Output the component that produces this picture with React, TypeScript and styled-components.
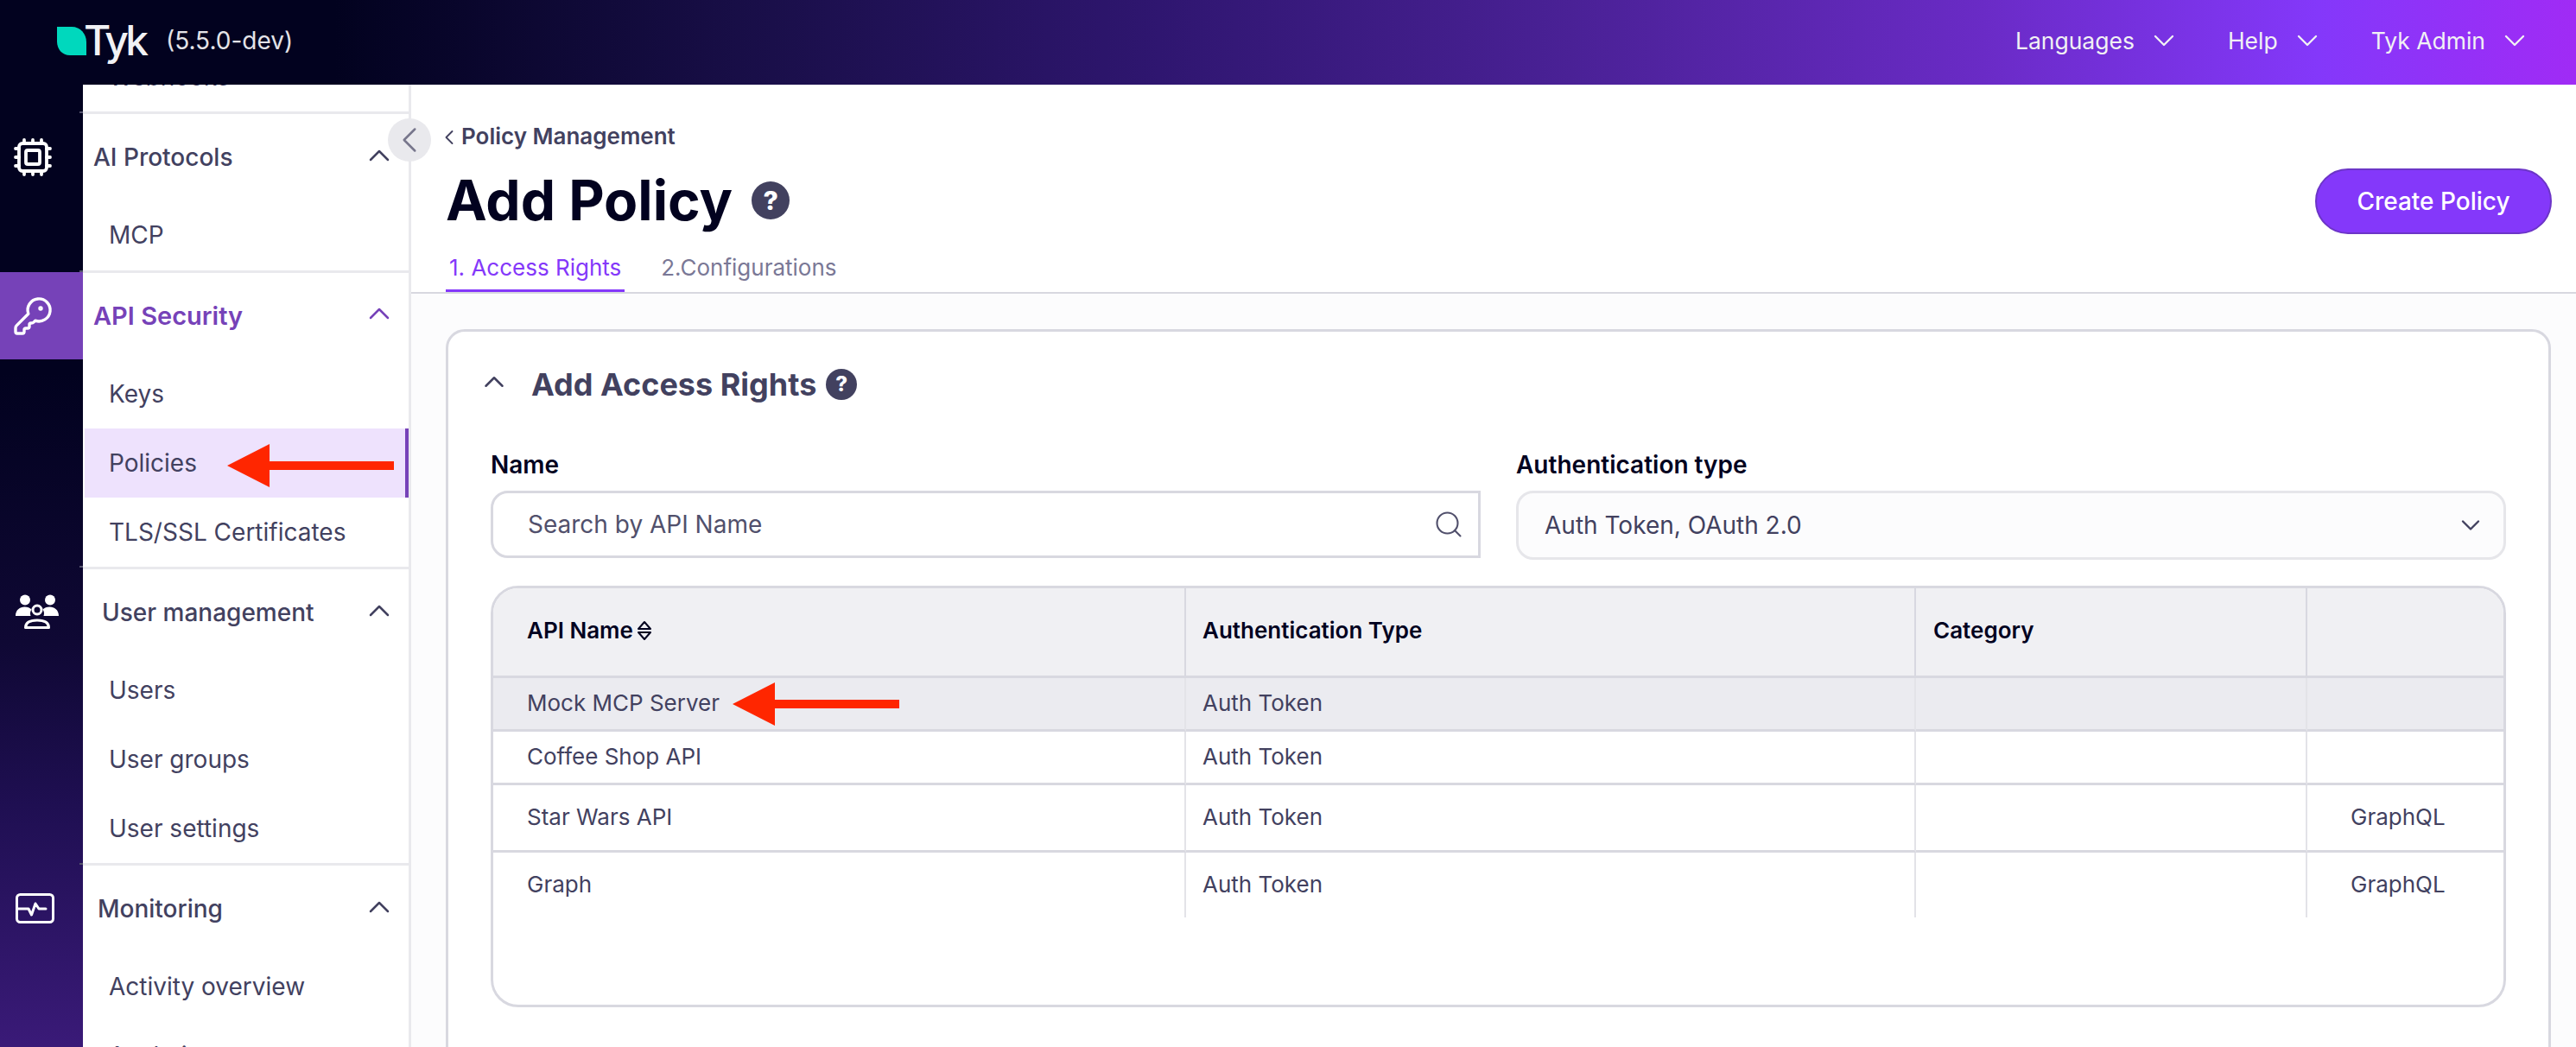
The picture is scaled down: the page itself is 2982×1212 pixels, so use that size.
import React from 'react'
import styled, { createGlobalStyle } from 'styled-components'
import { ChevronDown, ChevronLeft, ChevronUp, Cpu, KeyRound, Search } from 'lucide-react'

const GlobalStyle = createGlobalStyle`
  html, body {
    margin: 0;
    padding: 0;
    height: 100%;
    overflow: hidden;
    background: #fff;
  }
  body {
    font-family: Inter, "Liberation Sans", sans-serif;
    color: #42415f;
  }
  * { box-sizing: border-box; }
`

const Page = styled.div`
  width: 2982px;
  height: 1212px;
  display: flex;
  flex-direction: column;
  overflow: hidden;
`

const TopBar = styled.header`
  height: 98px;
  flex: none;
  display: flex;
  align-items: center;
  justify-content: space-between;
  padding: 0 51px 4px 66px;
  background: linear-gradient(90deg, #02021f 0%, #02021f 13%, #1a0f4a 30%, #2f1670 45%, #4a2196 61%, #6a2bc6 77%, #8438fa 90%, #a02bf5 100%);
`

const Brand = styled.div`
  display: flex;
  align-items: center;
`

const LogoName = styled.span`
  font-size: 48px;
  font-weight: 500;
  letter-spacing: -4px;
  color: #f1f1f4;
  line-height: 1;
  margin: 0 24px 0 -3px;
`

const Version = styled.span`
  font-size: 28px;
  color: #e3e3e8;
`

const TopMenu = styled.nav`
  display: flex;
  align-items: center;
  gap: 54px;
`

const TopMenuItem = styled.div`
  display: flex;
  align-items: center;
  gap: 14px;
  font-size: 26.500px;
  color: #f1f1f4;
`

const Body = styled.div`
  flex: 1;
  display: flex;
  min-height: 0;
`

const Rail = styled.div`
  width: 96px;
  flex: none;
  padding-top: 33px;
  background: linear-gradient(180deg, #02021f 0%, #02021f 30%, #0f0834 58%, #1f0f52 75%, #3a1a78 100%);
`

const RailSlot = styled.div<{ $height: number }>`
  height: ${p => p.$height}px;
  position: relative;
  &::before {
    content: '';
    position: absolute;
    top: -2px;
    right: 0;
    width: 4px;
    height: 2px;
    background: #55546e;
  }
`

const RailButton = styled.div<{ $active?: boolean; $pad?: number }>`
  height: 101px;
  display: flex;
  align-items: center;
  padding-left: ${p => p.$pad ?? 14}px;
  color: #fff;
  background: ${p => (p.$active ? '#7642b8' : 'transparent')};
`

const Sidebar = styled.aside`
  width: 380px;
  flex: none;
  background: #fff;
  border-right: 3px solid #e9e9ed;
  position: relative;
`

const SidebarScroll = styled.div`
  height: 100%;
  overflow: hidden;
`

const SidebarList = styled.div`
  margin-top: -49px;
`

const Group = styled.section<{ $pad?: number }>`
  border-bottom: 3px solid #e9e9ed;
  padding-bottom: ${p => p.$pad ?? 0}px;
  &:last-child { border-bottom: 0; }
`

const GroupHead = styled.div<{ $indent: number; $active?: boolean }>`
  height: 100px;
  display: flex;
  align-items: center;
  justify-content: space-between;
  padding: 0 14px ${p => (p.$active ? 2 : 0)}px ${p => p.$indent}px;
  font-size: ${p => (p.$active ? 29 : 28)}px;
  font-weight: ${p => (p.$active ? 600 : 500)};
  color: ${p => (p.$active ? '#7642b8' : '#42415f')};
  svg { margin-top: -4px; }
`

const GroupItem = styled.div<{ $active?: boolean }>`
  height: 80px;
  display: flex;
  align-items: center;
  position: relative;
  padding-left: ${p => (p.$active ? 28 : 30)}px;
  margin-left: ${p => (p.$active ? 2 : 0)}px;
  font-size: 28px;
  color: #42415f;
  background: ${p => (p.$active ? '#eee2fd' : 'transparent')};
  border-right: ${p => (p.$active ? '4px solid #7642b8' : '0')};
`

const CollapseButton = styled.button`
  position: absolute;
  top: 39px;
  right: -26px;
  width: 50px;
  height: 50px;
  border: 0;
  padding: 0;
  border-radius: 50%;
  background: #e9e9ed;
  color: #77768c;
  display: flex;
  align-items: center;
  justify-content: center;
  z-index: 2;
`

const Annotation = styled.svg<{ $left: number; $top: number }>`
  position: absolute;
  left: ${p => p.$left}px;
  top: ${p => p.$top}px;
`

const Main = styled.main`
  flex: 1;
  min-width: 0;
  background: #fcfcfd;
`

const PageHead = styled.div`
  background: #fff;
  padding: 41px 28px 0 40px;
  border-bottom: 2px solid #d8d8e0;
  height: 242px;
`

const Breadcrumb = styled.div`
  display: flex;
  align-items: center;
  height: 36px;
  font-size: 26px;
  font-weight: 600;
  color: #42415f;
  svg { margin-left: -10px; margin-top: 3px; }
`

const TitleRow = styled.div`
  display: flex;
  align-items: center;
  justify-content: space-between;
  margin-top: 21px;
  height: 72px;
`

const TitleWrap = styled.div`
  display: flex;
  align-items: center;
  gap: 22px;
`

const Title = styled.h1`
  margin: 0;
  font-size: 64px;
  font-weight: 700;
  line-height: 72px;
  color: #02021f;
`

const HelpBadge = styled.span<{ $size: number }>`
  width: ${p => p.$size}px;
  height: ${p => p.$size}px;
  flex: none;
  border-radius: 50%;
  background: #42415f;
  color: #fff;
  font-size: ${p => Math.round(p.$size * 0.68)}px;
  font-weight: 800;
  display: inline-flex;
  align-items: center;
  justify-content: center;
  line-height: 1;
`

const PrimaryButton = styled.button`
  width: 274px;
  height: 76px;
  margin-top: 2px;
  border-radius: 38px;
  border: 2px solid #6c35c7;
  background: #8438fa;
  color: #fff;
  font-family: inherit;
  font-size: 28px;
  font-weight: 500;
`

const Tabs = styled.div`
  display: flex;
  gap: 38px;
  margin-top: 24px;
`

const Tab = styled.div<{ $active?: boolean }>`
  height: 46px;
  line-height: 36px;
  padding: 0 4px;
  font-size: 26px;
  color: ${p => (p.$active ? '#8438fa' : '#7a7896')};
  border-bottom: 3px solid ${p => (p.$active ? '#8438fa' : 'transparent')};
`

const Content = styled.div`
  padding: 41px 29px 0 40px;
`

const Card = styled.section`
  height: 860px;
  background: #fff;
  border: 3px solid #d8d8e0;
  border-radius: 22px;
  padding: 0 49px;
`

const CardHead = styled.div`
  display: flex;
  align-items: center;
  height: 122px;
  color: #42415f;
  svg { margin-left: -15px; margin-top: -6px; }
`

const CardTitle = styled.h2`
  margin: 0 11px 0 24px;
  font-size: 36px;
  font-weight: 700;
  color: #42415f;
`

const FilterRow = styled.div`
  display: grid;
  grid-template-columns: 1fr 1fr;
  column-gap: 41px;
  margin-top: 14px;
`

const Field = styled.div`
  display: flex;
  flex-direction: column;
  gap: 12px;
`

const FieldLabel = styled.label`
  font-size: 28px;
  font-weight: 600;
  line-height: 36px;
  color: #02021f;
`

const SearchBox = styled.div`
  height: 78px;
  display: flex;
  align-items: center;
  justify-content: space-between;
  padding: 0 16px 0 40px;
  background: #fff;
  border: 3px solid #d8d8e0;
  border-radius: 20px 0 0 20px;
  font-size: 28px;
  color: #51506c;
`

const SelectBox = styled.div`
  height: 80px;
  display: flex;
  align-items: center;
  justify-content: space-between;
  padding: 0 20px 0 30px;
  background: #fcfcfd;
  border: 3px solid #e6e6ea;
  border-radius: 20px;
  font-size: 28px;
  color: #42415f;
`

const TableWrap = styled.div`
  margin-top: 30px;
  height: 488px;
  border: 3px solid #d8d8e0;
  border-radius: 32px;
  overflow: hidden;
  background: #fff;
`

const Table = styled.table`
  width: 100%;
  table-layout: fixed;
  border-collapse: separate;
  border-spacing: 0;
`

const HeadCell = styled.th<{ $pad: number; $w?: number }>`
  height: 104px;
  padding: 0 0 4px ${p => p.$pad}px;
  width: ${p => (p.$w ? `${p.$w}px` : 'auto')};
  text-align: left;
  font-size: 26px;
  font-weight: 600;
  color: #02021f;
  background: #f0f0f3;
  border-bottom: 3px solid #d8d8e0;
  border-right: 2px solid #d8d8e0;
  &:last-child { border-right: 0; }
`

const SortLabel = styled.span`
  display: inline-flex;
  align-items: center;
  gap: 4px;
`

const Row = styled.tr<{ $height: number; $selected?: boolean }>`
  height: ${p => p.$height}px;
  background: ${p => (p.$selected ? '#ebebf0' : '#fff')};
`

const Cell = styled.td<{ $pad: number }>`
  position: relative;
  padding: 0 0 2px ${p => p.$pad}px;
  font-size: 26px;
  color: #42415f;
  border-bottom: 3px solid #d8d8e0;
  border-right: 2px solid #e3e3e8;
  &:last-child { border-right: 0; }
  tr:last-child & { border-bottom: 0; }
`

const columnPads = [39, 19, 20, 50]
const columnWidths = [802, 845, 453]

const rows = [
  { name: 'Mock MCP Server', category: '', height: 62, selected: true },
  { name: 'Coffee Shop API', category: '', height: 62 },
  { name: 'Star Wars API', category: 'GraphQL', height: 78 },
  { name: 'Graph', category: 'GraphQL', height: 75 },
]

function RedArrow({ left, top }: { left: number; top: number }) {
  return (
    <Annotation $left={left} $top={top} width="193" height="50" viewBox="0 0 193 50">
      <path d="M0 25L49 0V20H193V30H49V50Z" fill="#ff2600" />
    </Annotation>
  )
}

function UsersIcon() {
  return (
    <svg width="50" height="40" viewBox="0 0 50 40" fill="none">
      <circle cx="11" cy="6.500" r="6" fill="#fff" />
      <circle cx="40" cy="6.500" r="6" fill="#fff" />
      <path d="M0 25c0-7 5-10.500 10.500-10.500 3.500 0 6 1 8 3-1.500 2-2 5-1 7.500z" fill="#fff" />
      <path d="M50 25c0-7-5-10.500-10.500-10.500-3.500 0-6 1-8 3 1.500 2 2 5 1 7.500z" fill="#fff" />
      <circle cx="25" cy="18" r="5" stroke="#fff" strokeWidth="3" />
      <path d="M11.500 38.500c0-6 5-8.500 13.500-8.500s13.500 2.500 13.500 8.500z" stroke="#fff" strokeWidth="3" strokeLinejoin="round" />
    </svg>
  )
}

function MonitorIcon() {
  return (
    <svg width="45" height="35" viewBox="0 0 45 35" fill="none">
      <rect x="1.500" y="1.500" width="42" height="32" rx="4" stroke="#fff" strokeWidth="3" />
      <path d="M3 18H15l3.500 7L23 12l4 6h8" stroke="#fff" strokeWidth="3" strokeLinejoin="round" strokeLinecap="round" />
    </svg>
  )
}

function TykLeaf() {
  return (
    <svg width="34" height="33" viewBox="0 0 34 33">
      <path d="M0 0H17C27 0 34 8 34 18V33H15C6 33 0 26 0 17Z" fill="#00d8bd" />
    </svg>
  )
}

function SortIcon() {
  return (
    <svg width="18" height="24" viewBox="0 0 18 24" fill="none" stroke="#02021f" strokeWidth="2">
      <path d="M9 2L16 10H2Z" strokeLinejoin="round" />
      <path d="M9 22L16 14H2Z" strokeLinejoin="round" />
    </svg>
  )
}

const Chevron = () => <ChevronUp size={40} strokeWidth={1.5} />

const App: React.FunctionComponent<{}> = () => {
  return (
    <Page>
      <GlobalStyle />
      <TopBar>
        <Brand>
          <TykLeaf />
          <LogoName>Tyk</LogoName>
          <Version>(5.5.0-dev)</Version>
        </Brand>
        <TopMenu>
          <TopMenuItem>Languages <ChevronDown size={40} strokeWidth={1.4} /></TopMenuItem>
          <TopMenuItem>Help <ChevronDown size={40} strokeWidth={1.4} /></TopMenuItem>
          <TopMenuItem>Tyk Admin <ChevronDown size={40} strokeWidth={1.4} /></TopMenuItem>
        </TopMenu>
      </TopBar>
      <Body>
        <Rail>
          <RailSlot $height={184}>
            <RailButton $pad={14}><Cpu size={48} strokeWidth={1.9} /></RailButton>
          </RailSlot>
          <RailSlot $height={342}>
            <RailButton $active $pad={14}><KeyRound size={48} strokeWidth={1.7} /></RailButton>
          </RailSlot>
          <RailSlot $height={344}>
            <RailButton $pad={18}><UsersIcon /></RailButton>
          </RailSlot>
          <RailSlot $height={101}>
            <RailButton $pad={18}><MonitorIcon /></RailButton>
          </RailSlot>
        </Rail>
        <Sidebar>
          <CollapseButton><ChevronLeft size={50} strokeWidth={1.2} /></CollapseButton>
          <SidebarScroll>
            <SidebarList>
              <Group>
                <GroupItem>Webhooks</GroupItem>
              </Group>
              <Group $pad={1}>
                <GroupHead $indent={12}>AI Protocols <Chevron /></GroupHead>
                <GroupItem>MCP</GroupItem>
              </Group>
              <Group>
                <GroupHead $indent={12} $active>API Security <Chevron /></GroupHead>
                <GroupItem>Keys</GroupItem>
                <GroupItem $active>
                  Policies
                  <RedArrow left={165} top={18} />
                </GroupItem>
                <GroupItem>TLS/SSL Certificates</GroupItem>
              </Group>
              <Group>
                <GroupHead $indent={22}>User management <Chevron /></GroupHead>
                <GroupItem>Users</GroupItem>
                <GroupItem>User groups</GroupItem>
                <GroupItem>User settings</GroupItem>
              </Group>
              <Group>
                <GroupHead $indent={17}>Monitoring <Chevron /></GroupHead>
                <GroupItem>Activity overview</GroupItem>
                <GroupItem>Analytics</GroupItem>
              </Group>
            </SidebarList>
          </SidebarScroll>
        </Sidebar>
        <Main>
          <PageHead>
            <Breadcrumb><ChevronLeft size={28} strokeWidth={1.6} />Policy Management</Breadcrumb>
            <TitleRow>
              <TitleWrap>
                <Title>Add Policy</Title>
                <HelpBadge $size={44}>?</HelpBadge>
              </TitleWrap>
              <PrimaryButton>Create Policy</PrimaryButton>
            </TitleRow>
            <Tabs>
              <Tab $active>1. Access Rights</Tab>
              <Tab>2.Configurations</Tab>
            </Tabs>
          </PageHead>
          <Content>
            <Card>
              <CardHead>
                <ChevronUp size={38} strokeWidth={1.6} />
                <CardTitle>Add Access Rights</CardTitle>
                <HelpBadge $size={36}>?</HelpBadge>
              </CardHead>
              <FilterRow>
                <Field>
                  <FieldLabel>Name</FieldLabel>
                  <SearchBox>
                    Search by API Name
                    <Search size={36} strokeWidth={1.4} />
                  </SearchBox>
                </Field>
                <Field>
                  <FieldLabel>Authentication type</FieldLabel>
                  <SelectBox>
                    Auth Token, OAuth 2.0
                    <ChevronDown size={36} strokeWidth={1.6} />
                  </SelectBox>
                </Field>
              </FilterRow>
              <TableWrap>
                <Table>
                  <thead>
                    <tr>
                      <HeadCell $pad={columnPads[0]} $w={columnWidths[0]}>
                        <SortLabel>API Name <SortIcon /></SortLabel>
                      </HeadCell>
                      <HeadCell $pad={columnPads[1]} $w={columnWidths[1]}>Authentication Type</HeadCell>
                      <HeadCell $pad={columnPads[2]} $w={columnWidths[2]}>Category</HeadCell>
                      <HeadCell $pad={columnPads[3]} />
                    </tr>
                  </thead>
                  <tbody>
                    {rows.map(row => (
                      <Row key={row.name} $height={row.height} $selected={row.selected}>
                        <Cell $pad={columnPads[0]}>
                          {row.name}
                          {row.selected && <RedArrow left={277} top={5} />}
                        </Cell>
                        <Cell $pad={columnPads[1]}>Auth Token</Cell>
                        <Cell $pad={columnPads[2]} />
                        <Cell $pad={columnPads[3]}>{row.category}</Cell>
                      </Row>
                    ))}
                  </tbody>
                </Table>
              </TableWrap>
            </Card>
          </Content>
        </Main>
      </Body>
    </Page>
  )
}

export default App
